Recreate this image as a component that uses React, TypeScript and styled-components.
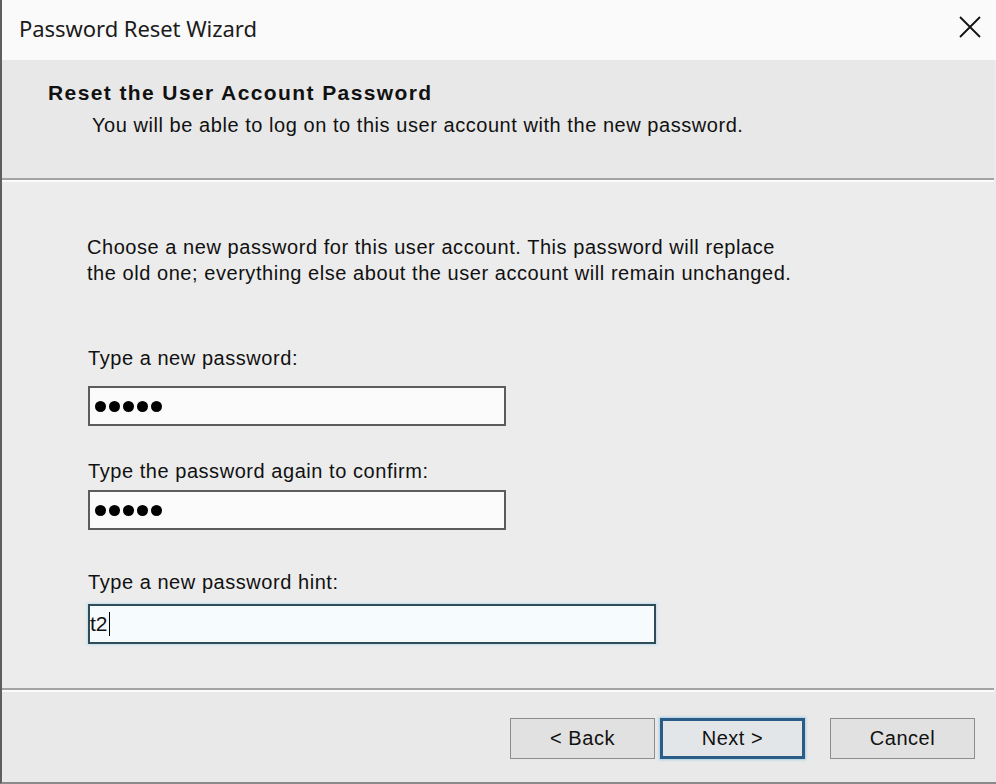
import React from "react";
import styled, { createGlobalStyle } from "styled-components";

const Global = createGlobalStyle`
  html, body { margin: 0; padding: 0; background: #ececec; }
  body { width: 996px; height: 784px; overflow: hidden; }
`;

const Window = styled.div`
  width: 996px;
  height: 784px;
  box-sizing: border-box;
  display: flex;
  flex-direction: column;
  background: #ebebeb;
  border-left: 2px solid #5e5e5e;
  border-bottom: 2px solid #8a8a8a;
  font-family: "Liberation Sans", Arial, sans-serif;
  letter-spacing: 0.55px;
  color: #111;
`;

const TitleBar = styled.div`
  height: 60px;
  flex: none;
  display: flex;
  align-items: center;
  justify-content: space-between;
  padding: 0 16px 0 17px;
  background: #fafafa;
  box-sizing: border-box;
`;

const Title = styled.div`
  font-family: "Noto Sans", "Open Sans", sans-serif;
  font-size: 22px;
  color: #1b1b1b;
  letter-spacing: -0.05px;
  margin-top: -4px;
`;

const Close = styled.div`
  width: 24px;
  height: 24px;
  margin-top: -6px;
  margin-right: -2px;
  display: flex;
  align-items: center;
  justify-content: center;
`;

const Header = styled.div`
  height: 118px;
  flex: none;
  background: #e8e8e8;
  box-sizing: border-box;
  padding: 20px 0 0 46px;
  margin-right: 2px;
`;

const HeaderTitle = styled.div`
  font-weight: bold;
  font-size: 21px;
  line-height: 26px;
  letter-spacing: 1.4px;
`;

const HeaderSub = styled.div`
  font-size: 20px;
  line-height: 26px;
  padding-left: 44px;
  margin-top: 6px;
`;

const Rule = styled.div`
  flex: none;
  height: 2px;
  margin-right: 2px;
  border-top: 2px solid #a3a3a3;
  background: #fbfbfb;
`;

const Body = styled.div`
  flex: 1;
  box-sizing: border-box;
  padding: 52px 0 0 85px;
  display: flex;
  flex-direction: column;
  background: #ececec;
`;

const Paragraph = styled.p`
  margin: 0 0 59px 0;
  font-size: 20px;
  line-height: 26px;
`;

const Field = styled.div<{ $after: number }>`
  display: flex;
  flex-direction: column;
  margin-bottom: ${(p) => p.$after}px;
`;

const Label = styled.div<{ $gap: number }>`
  font-size: 20px;
  line-height: 26px;
  margin: 0 0 ${(p) => p.$gap}px 1px;
`;

const Box = styled.div<{ $w: number; $focus?: boolean }>`
  width: ${(p) => p.$w}px;
  height: 40px;
  box-sizing: border-box;
  margin-left: 1px;
  display: flex;
  align-items: center;
  padding-left: 4px;
  background: ${(p) => (p.$focus ? "#f6fbfd" : "#fbfbfb")};
  border: 2px solid ${(p) => (p.$focus ? "#2f4c58" : "#5c5c5c")};
  box-shadow: ${(p) => (p.$focus ? "0 0 2px 1px rgba(150,210,235,0.5)" : "none")};
`;

const Dots = styled.span`
  display: flex;
  gap: 3px;
  margin-left: 1px;
  margin-top: 1px;
`;

const Dot = styled.span`
  width: 11px;
  height: 11px;
  border-radius: 50%;
  background: #000;
`;

const HintText = styled.span`
  font-size: 21px;
  color: #111;
  letter-spacing: 0;
  margin-left: -4px;
`;

const Caret = styled.span`
  display: inline-block;
  width: 1px;
  height: 24px;
  background: #000;
  margin-left: 1px;
`;

const Footer = styled.div`
  height: 90px;
  flex: none;
  box-sizing: border-box;
  display: flex;
  justify-content: flex-end;
  align-items: flex-start;
  padding: 26px 21px 0 0;
  background: #e9e9e9;
`;

const Btn = styled.div<{ $default?: boolean; $gap?: number }>`
  width: 145px;
  height: 41px;
  box-sizing: border-box;
  margin-left: ${(p) => p.$gap ?? 0}px;
  display: flex;
  align-items: center;
  justify-content: center;
  font-size: 20px;
  color: #111;
  background: ${(p) => (p.$default ? "#e3e6e8" : "#e1e1e1")};
  border: ${(p) => (p.$default ? "3px solid #2a5c86" : "1px solid #8c8c8c")};
  box-shadow: ${(p) => (p.$default ? "0 0 2px 1px rgba(120,190,230,0.6)" : "none")};
`;

const Masked = () => (
  <Dots aria-label="•••••">
    <Dot />
    <Dot />
    <Dot />
    <Dot />
    <Dot />
  </Dots>
);

export default function App() {
  return (
    <>
      <Global />
      <Window>
        <TitleBar>
          <Title>Password Reset Wizard</Title>
          <Close>
            <svg width="22" height="22" viewBox="0 0 22 22">
              <path d="M1 1 L21 21 M21 1 L1 21" stroke="#111" strokeWidth="1.8" fill="none" />
            </svg>
          </Close>
        </TitleBar>
        <Header>
          <HeaderTitle>Reset the User Account Password</HeaderTitle>
          <HeaderSub>You will be able to log on to this user account with the new password.</HeaderSub>
        </Header>
        <Rule />
        <Body>
          <Paragraph>
            Choose a new password for this user account. This password will replace
            <br />
            the old one; everything else about the user account will remain unchanged.
          </Paragraph>
          <Field $after={32}>
            <Label $gap={15}>Type a new password:</Label>
            <Box $w={418}>
              <Masked />
            </Box>
          </Field>
          <Field $after={39}>
            <Label $gap={6}>Type the password again to confirm:</Label>
            <Box $w={418}>
              <Masked />
            </Box>
          </Field>
          <Field $after={0}>
            <Label $gap={9}>Type a new password hint:</Label>
            <Box $w={568} $focus>
              <HintText>t2</HintText>
              <Caret />
            </Box>
          </Field>
        </Body>
        <Rule />
        <Footer>
          <Btn>&lt; Back</Btn>
          <Btn $default $gap={5}>Next &gt;</Btn>
          <Btn $gap={25}>Cancel</Btn>
        </Footer>
      </Window>
    </>
  );
}
